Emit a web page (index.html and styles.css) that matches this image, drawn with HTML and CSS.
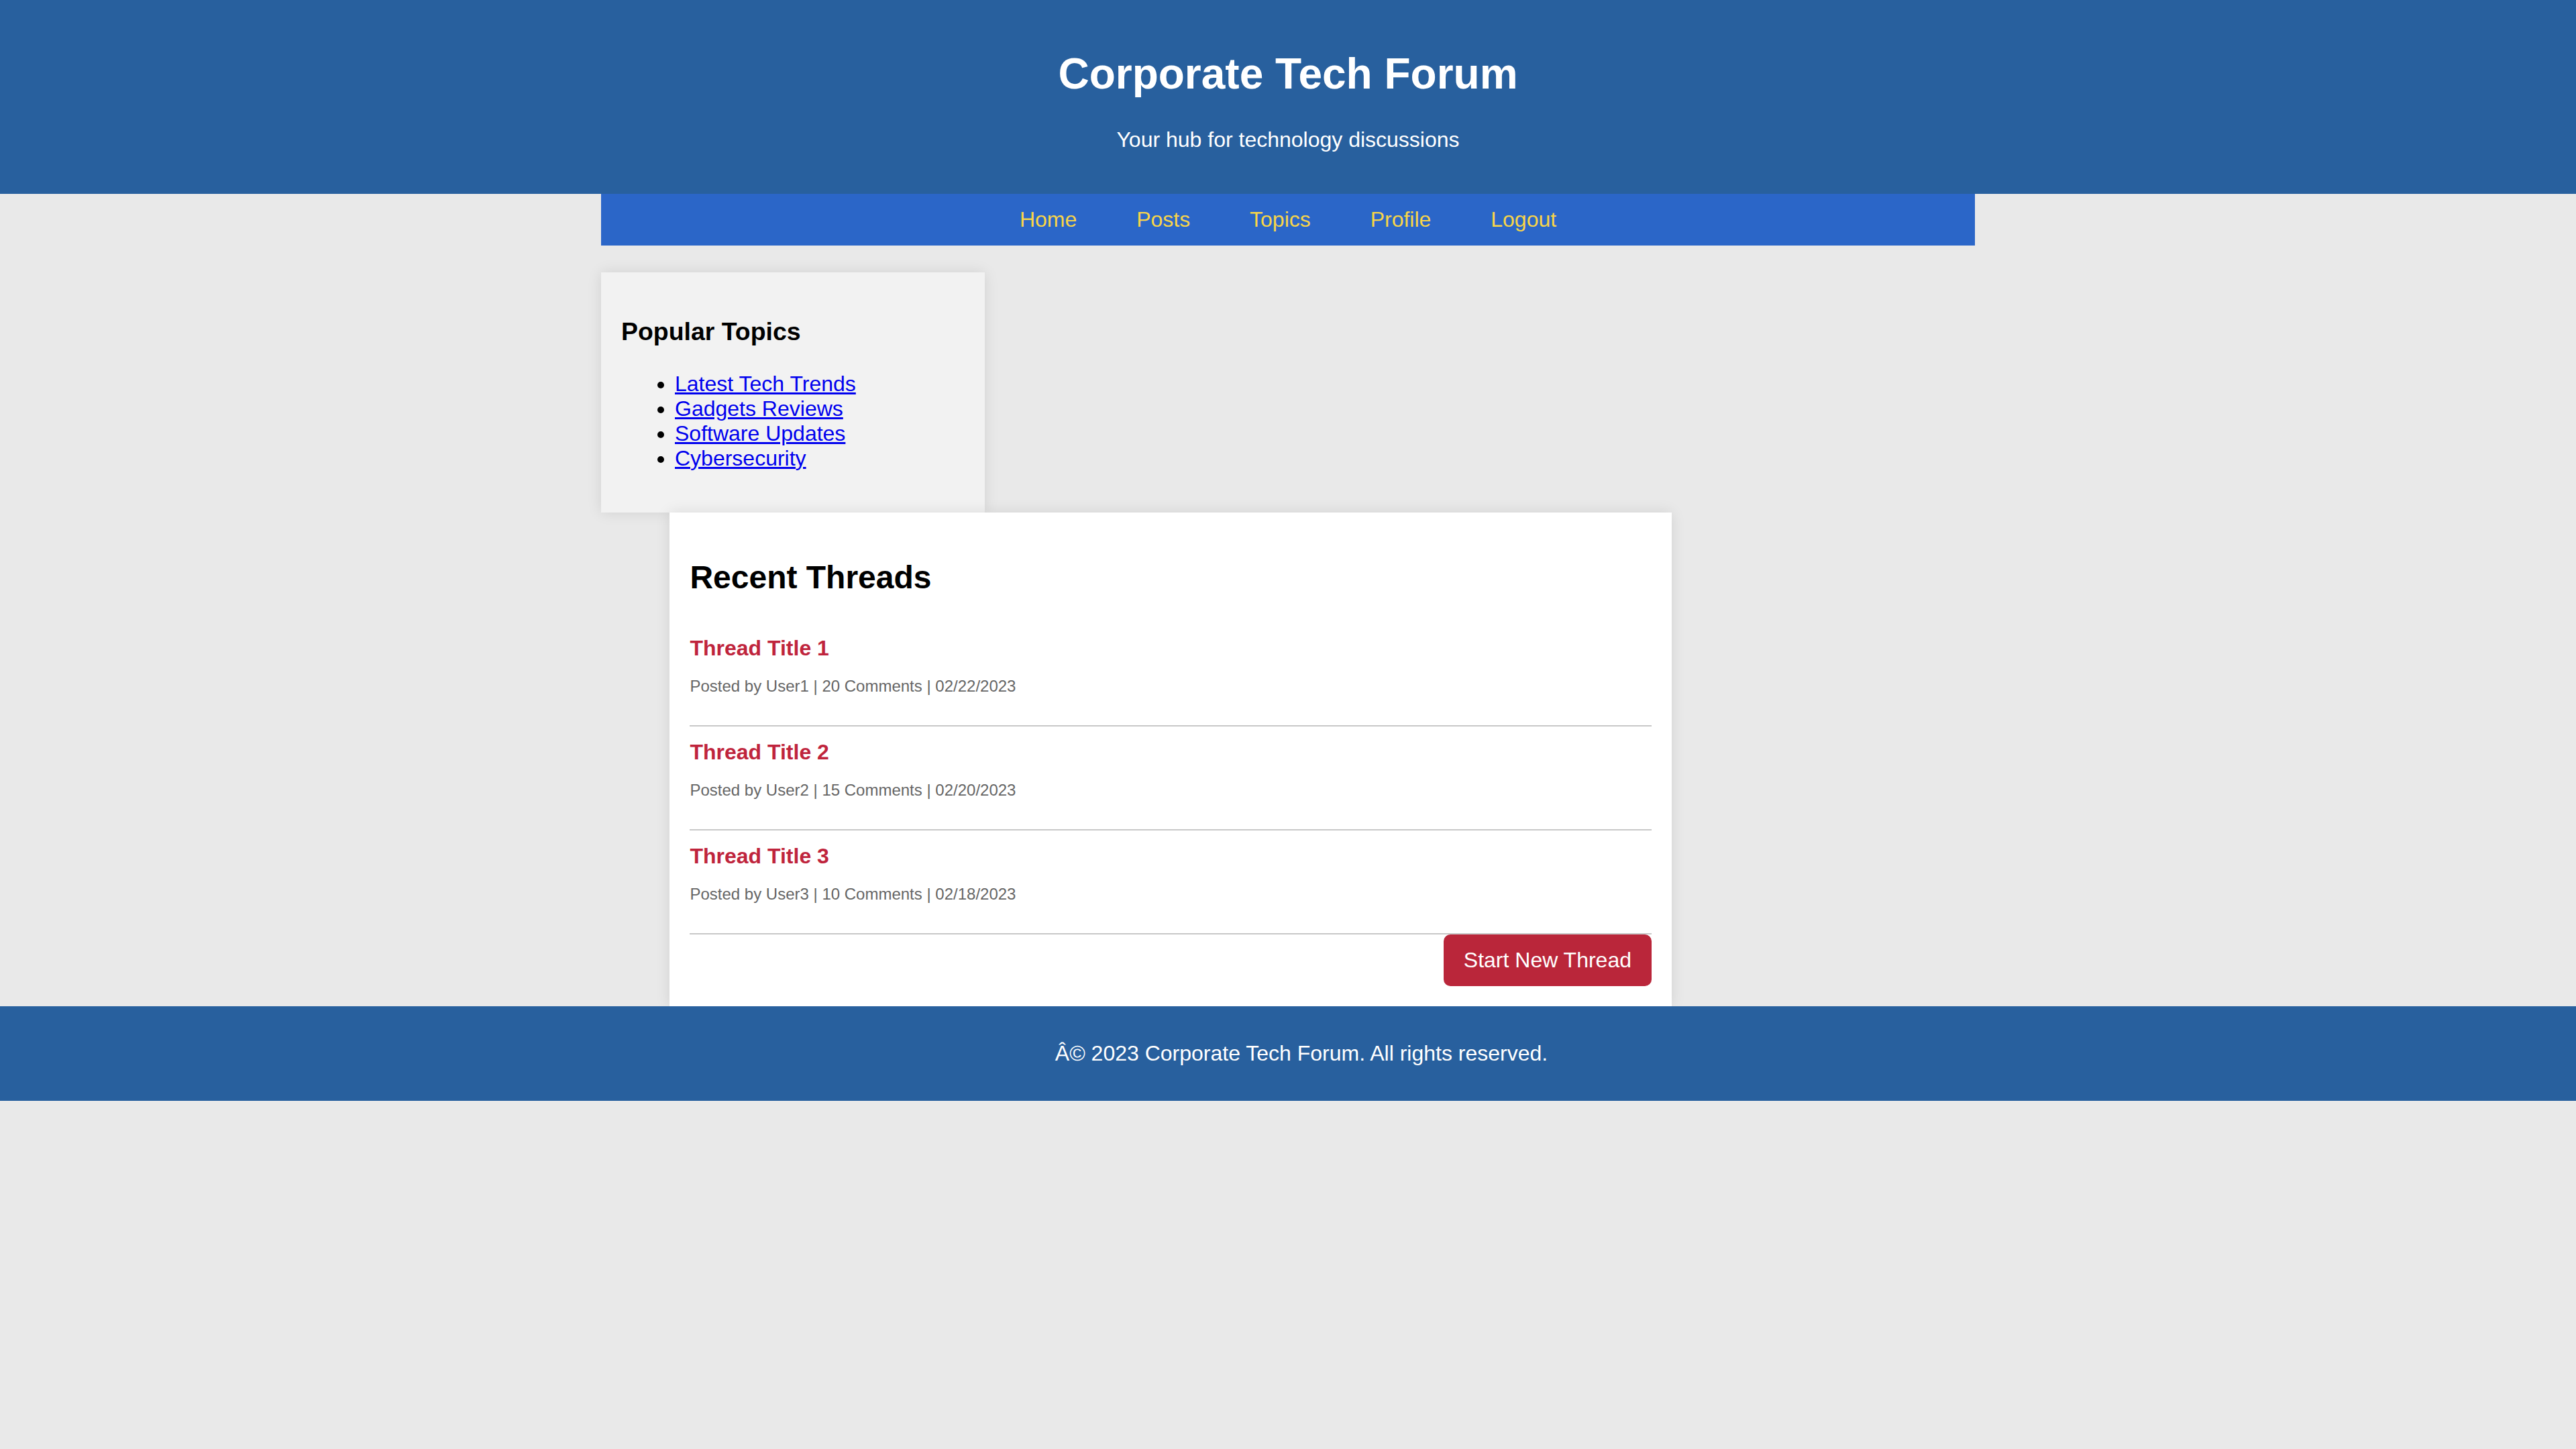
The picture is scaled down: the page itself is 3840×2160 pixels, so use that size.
FILE: index.html
```html
<!DOCTYPE html>
<html lang="en">
<head>
<meta charset="utf-8">
<title>Corporate Tech Forum</title>
<link rel="stylesheet" href="styles.css">
</head>
<body>
<header class="site-header">
  <h1 class="site-title">Corporate Tech Forum</h1>
  <p class="site-tagline">Your hub for technology discussions</p>
</header>
<div class="container">
  <nav class="main-nav">
    <a href="#" class="nav-link">Home</a>
    <a href="#" class="nav-link">Posts</a>
    <a href="#" class="nav-link">Topics</a>
    <a href="#" class="nav-link">Profile</a>
    <a href="#" class="nav-link">Logout</a>
  </nav>
  <aside class="sidebar">
    <h3 class="sidebar-title">Popular Topics</h3>
    <ul class="topic-list">
      <li><a href="#" class="topic-link">Latest Tech Trends</a></li>
      <li><a href="#" class="topic-link">Gadgets Reviews</a></li>
      <li><a href="#" class="topic-link">Software Updates</a></li>
      <li><a href="#" class="topic-link">Cybersecurity</a></li>
    </ul>
  </aside>
  <main class="content">
    <h2 class="content-title">Recent Threads</h2>
    <div class="thread">
      <h3 class="thread-title">Thread Title 1</h3>
      <p class="thread-meta">Posted by User1 | 20 Comments | 02/22/2023</p>
    </div>
    <div class="thread">
      <h3 class="thread-title">Thread Title 2</h3>
      <p class="thread-meta">Posted by User2 | 15 Comments | 02/20/2023</p>
    </div>
    <div class="thread">
      <h3 class="thread-title">Thread Title 3</h3>
      <p class="thread-meta">Posted by User3 | 10 Comments | 02/18/2023</p>
    </div>
    <div class="actions">
      <button class="new-thread-btn">Start New Thread</button>
    </div>
  </main>
</div>
<footer class="site-footer">
  <p class="footer-text">Â© 2023 Corporate Tech Forum. All rights reserved.</p>
</footer>
</body>
</html>
```
FILE: styles.css
```css
html, body {
  margin: 0;
  padding: 0;
}

body {
  background: #e9e9e9;
  font-family: "Liberation Sans", Arial, sans-serif;
  font-size: 32px;
  color: #000;
}

.site-header {
  background: #28609e;
  color: #fff;
  text-align: center;
  padding: 30px;
}

.site-title {
  font-size: 64px;
  font-weight: bold;
  margin: 42.88px 0;
}

.site-tagline {
  font-size: 32px;
  margin: 32px 0;
}

.container {
  width: 2048px;
  margin: 0 auto;
}

.main-nav {
  background: #2b66c8;
  padding: 20px 0;
  text-align: center;
}

.nav-link {
  color: #f8d548;
  text-decoration: none;
  font-size: 32px;
  padding: 0 40px;
}

.sidebar {
  margin-top: 40px;
  width: 25%;
  padding: 30px;
  background: #f2f2f2;
  box-shadow: 0 0 20px rgba(0, 0, 0, 0.1);
}

.sidebar-title {
  font-size: 37.44px;
  font-weight: bold;
  margin: 37.44px 0;
}

.topic-list {
  margin: 32px 0;
  padding-left: 80px;
  font-size: 32px;
}

.topic-link {
  color: #0000ee;
  text-decoration: underline;
}

.content {
  margin-left: 5%;
  width: 70%;
  padding: 30px;
  background: #fff;
  box-shadow: 0 0 20px rgba(0, 0, 0, 0.1);
}

.content-title {
  font-size: 48px;
  font-weight: bold;
  margin: 39.84px 0;
}

.thread {
  padding: 20px 0;
  border-bottom: 2px solid #c8c8c8;
}

.thread-title {
  font-size: 32px;
  font-weight: bold;
  color: #bf243c;
  margin: 0;
}

.thread-meta {
  font-size: 24px;
  color: #666;
  margin: 24px 0;
}

.actions {
  display: flex;
  justify-content: flex-end;
}

.new-thread-btn {
  background: #ba263a;
  color: #fff;
  border: none;
  border-radius: 10px;
  padding: 20px 30px;
  font-family: "Liberation Sans", Arial, sans-serif;
  font-size: 32px;
  line-height: normal;
}

.site-footer {
  background: #28609e;
  color: #fff;
  text-align: center;
  padding: 20px 0 20px 40px;
}

.footer-text {
  font-size: 32px;
  margin: 32px 0;
}
```
